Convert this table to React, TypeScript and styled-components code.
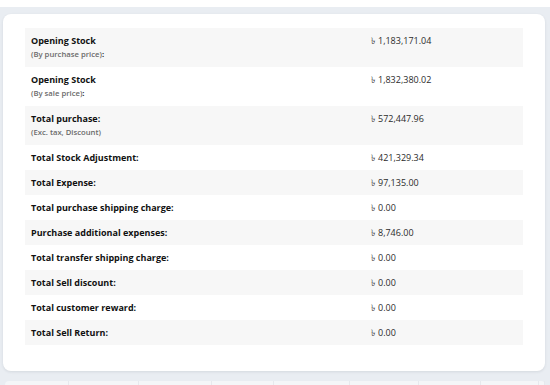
import React from "react";
import styled, { createGlobalStyle } from "styled-components";

const GlobalStyle = createGlobalStyle`
  html, body {
    margin: 0;
    padding: 0;
    background: #e9edf2;
    font-family: "Open Sans", "Noto Sans", "DejaVu Sans", sans-serif;
    color: #212529;
  }
`;

const Page = styled.div`
  display: flex;
  flex-direction: column;
  padding: 0 5px 0 3px;
  height: 385px;
  overflow: hidden;
`;

const TopStrip = styled.div`
  flex-shrink: 0;
  height: 7px;
  margin: 0 -5px 0 -3px;
  background: #ffffff;
`;

const Card = styled.section`
  flex-shrink: 0;
  margin-top: 7px;
  background: #ffffff;
  border-radius: 8px;
  box-shadow: 0 1px 3px rgba(30, 40, 60, 0.1);
  padding: 14px 22px 26px 22px;
`;

const Table = styled.table`
  width: 100%;
  border-collapse: collapse;
`;

const Row = styled.tr<{ $striped: boolean }>`
  background: ${(p) => (p.$striped ? "#f7f7f7" : "#ffffff")};
`;

const LabelCell = styled.td`
  width: 328px;
  padding: 6px 6px;
  vertical-align: top;
  font-size: 9px;
  line-height: 13px;
  font-weight: 700;
  color: #111111;
`;

const Sub = styled.div`
  margin-top: 1px;
  font-size: 7.7px;
  line-height: 13px;
  font-weight: 600;
  color: #6a6a6a;
`;

const Colon = styled.span`
  color: #111111;
  font-weight: 700;
`;

const ValueCell = styled.td`
  padding: 6px 6px;
  vertical-align: top;
  font-size: 9px;
  line-height: 13px;
  color: #2b2b2b;
`;

const Taka = styled.span`
  font-size: 8.5px;
  line-height: 0;
  margin-right: 3px;
  color: #444;
`;

const NextCard = styled.div`
  margin-top: 10px;
  flex: 1 0 4px;
  display: grid;
  grid-template-columns: 64px 70px 73px 62px 76px 69px 62px 58px 1fr;
  background: #f4f6f8;
  border-radius: 6px 6px 0 0;
  margin-left: 2px;
`;

const GhostCell = styled.div`
  border-right: 1px solid #e6e9ed;
`;

type Item = { label: string; sub?: string; subColon?: boolean; value: string };

const items: Item[] = [
  { label: "Opening Stock", sub: "(By purchase price)", subColon: true, value: "1,183,171.04" },
  { label: "Opening Stock", sub: "(By sale price)", subColon: true, value: "1,832,380.02" },
  { label: "Total purchase:", sub: "(Exc. tax, Discount)", value: "572,447.96" },
  { label: "Total Stock Adjustment:", value: "421,329.34" },
  { label: "Total Expense:", value: "97,135.00" },
  { label: "Total purchase shipping charge:", value: "0.00" },
  { label: "Purchase additional expenses:", value: "8,746.00" },
  { label: "Total transfer shipping charge:", value: "0.00" },
  { label: "Total Sell discount:", value: "0.00" },
  { label: "Total customer reward:", value: "0.00" },
  { label: "Total Sell Return:", value: "0.00" },
];

export default function App() {
  return (
    <>
      <GlobalStyle />
      <Page>
        <TopStrip />
        <Card>
          <Table>
            <tbody>
              {items.map((it, i) => (
                <Row key={i} $striped={i % 2 === 0}>
                  <LabelCell>
                    {it.label}
                    {it.sub && (
                      <Sub>
                        {it.sub}
                        {it.subColon && <Colon>:</Colon>}
                      </Sub>
                    )}
                  </LabelCell>
                  <ValueCell>
                    <Taka>৳</Taka>
                    {it.value}
                  </ValueCell>
                </Row>
              ))}
            </tbody>
          </Table>
        </Card>
        <NextCard>
          {Array.from({ length: 9 }).map((_, i) => (
            <GhostCell key={i} />
          ))}
        </NextCard>
      </Page>
    </>
  );
}
